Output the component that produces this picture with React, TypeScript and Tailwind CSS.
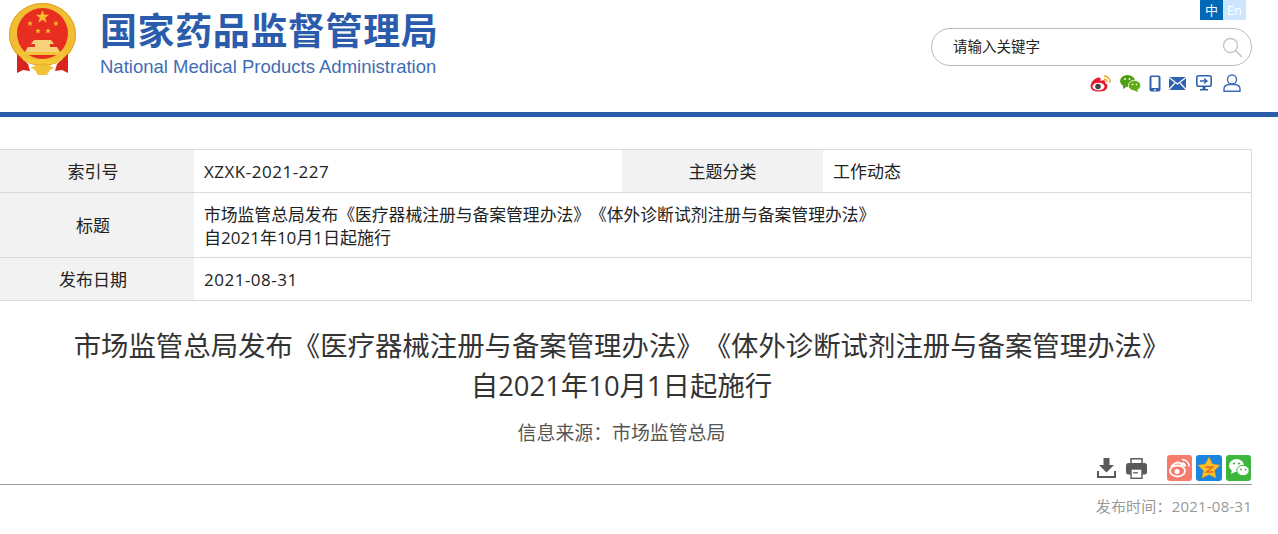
import React from 'react';

const CJK = "font-['Open_Sans','Noto_Sans_CJK_SC',sans-serif] [text-spacing-trim:space-all]";

// 五角星 points
const starPoints = (cx: number, cy: number, r: number) =>
  Array.from({ length: 10 })
    .map((_, i) => {
      const a = (Math.PI / 5) * i - Math.PI / 2;
      const rad = i % 2 === 0 ? r : r * 0.4;
      return `${cx + rad * Math.cos(a)},${cy + rad * Math.sin(a)}`;
    })
    .join(' ');

// --- emblem ---
const Emblem = () => (
  <svg width="68" height="74" viewBox="9 2 68 74" className="shrink-0">
    <ellipse cx="42.500" cy="34.500" rx="33.500" ry="31.500" fill="#f1bd33" />
    <ellipse cx="42.500" cy="34.500" rx="33" ry="31" fill="none" stroke="#e2a024" strokeWidth="1" />
    <circle cx="42.500" cy="33.500" r="25.500" fill="#e72e20" />
    <polygon points={starPoints(42.500, 17, 7)} fill="#f5c02c" />
    <polygon points={starPoints(30, 23.500, 3)} fill="#f5c02c" />
    <polygon points={starPoints(56, 23.500, 3)} fill="#f5c02c" />
    <polygon points={starPoints(38, 31, 3)} fill="#f5c02c" />
    <polygon points={starPoints(48, 31, 3)} fill="#f5c02c" />
    <path d="M34 40 H51 L54 44 H50 V47 H57 L60 52 H25 L28 47 H35 V44 H31 Z" fill="#f5d27a" />
    <path d="M22 52 H63 V55 H22 Z" fill="#f3c53b" />
    <path d="M17 54 L28 64 L30 71 L23 70 L17 73 Z M68 54 L57 64 L55 71 L62 70 L68 73 Z" fill="#d7241d" />
    <path d="M21 55 Q32 62 42.500 59 Q53 62 64 55 L62 60 Q53 66 42.500 63 Q32 66 23 60 Z" fill="#f6c836" />
    <path d="M31 68 Q37 63 42.500 66 Q48 63 54 68 L50 70 L47 75 H38 L35 70 Z" fill="#f1c23a" />
  </svg>
);

// --- header icons ---
const Weibo = () => (
  <svg width="21" height="17" viewBox="0 0 21 17">
    <path d="M0.500 11 Q1 6.500 5 4 Q9.500 1.500 10.500 3.500 Q11 5 10 6 Q14 4.500 15 6 Q15.500 7 15 8 Q17.500 9 17.500 11 Q17.500 16.500 9 16.500 Q0.500 16.500 0.500 11 Z" fill="#e6162d" />
    <ellipse cx="8.500" cy="11.500" rx="6" ry="3.800" fill="#fff" />
    <circle cx="8" cy="11.500" r="2.800" fill="#444" />
    <path d="M14 1 a6 6 0 0 1 6 6.500" fill="none" stroke="#f5a623" strokeWidth="1.600" />
    <path d="M14 4.200 a3 3 0 0 1 3 3" fill="none" stroke="#f5a623" strokeWidth="1.400" />
  </svg>
);

const Wechat = () => (
  <svg width="21" height="17" viewBox="0 0 21 17">
    <ellipse cx="7.500" cy="6" rx="7.500" ry="6" fill="#4f9e14" />
    <path d="M3 10 L3 14 L7 11.500 Z" fill="#4f9e14" />
    <ellipse cx="14.500" cy="10.500" rx="6.200" ry="5.200" fill="#5fae17" stroke="#fff" strokeWidth="0.800" />
    <path d="M17 14 L18 17 L14 15.500 Z" fill="#5fae17" />
    <circle cx="5" cy="4" r="0.900" fill="#fff" />
    <circle cx="9.500" cy="4" r="0.900" fill="#fff" />
    <circle cx="12.500" cy="9.500" r="0.800" fill="#fff" />
    <circle cx="16.500" cy="9.500" r="0.800" fill="#fff" />
  </svg>
);

const Phone = () => (
  <svg width="12" height="17" viewBox="0 0 12 17">
    <rect x="0.500" y="0.500" width="11" height="16" rx="2" fill="#2e62ae" />
    <rect x="2.500" y="2" width="7" height="11" fill="#fff" />
    <circle cx="6" cy="14.800" r="0.900" fill="#fff" />
  </svg>
);

const Mail = () => (
  <svg width="17" height="13" viewBox="0 0 17 13">
    <rect width="17" height="13" fill="#2e62ae" />
    <path d="M0 0.500 L8.500 7 L17 0.500 M0 12.500 L6 6 M17 12.500 L11 6" fill="none" stroke="#fff" strokeWidth="1.200" />
  </svg>
);

const Screen = () => (
  <svg width="16" height="16" viewBox="0 0 16 16">
    <rect x="0.800" y="0.800" width="14.400" height="10.400" rx="2" fill="#fff" stroke="#2e62ae" strokeWidth="1.600" />
    <path d="M4 6 H10 M8 3.500 L11 6 L8 8.500" fill="none" stroke="#2e62ae" strokeWidth="1.300" />
    <path d="M6.500 12 H9.500 V14 H12 V15.500 H4 V14 H6.500 Z" fill="#2e62ae" />
  </svg>
);

const User = () => (
  <svg width="18" height="18" viewBox="0 0 18 18">
    <circle cx="9" cy="5.500" r="4.500" fill="none" stroke="#3c6db5" strokeWidth="1.400" />
    <path d="M1 17.200 V15 Q1 11.500 5.500 10.500 H12.500 Q17 11.500 17 15 V17.200 Z" fill="none" stroke="#3c6db5" strokeWidth="1.400" />
  </svg>
);

const SearchIcon = () => (
  <svg width="21" height="21" viewBox="0 0 21 21">
    <circle cx="8.500" cy="8.500" r="7" fill="none" stroke="#c6c6c6" strokeWidth="1.400" />
    <path d="M13.500 13.500 L20 20" stroke="#c6c6c6" strokeWidth="1.600" />
  </svg>
);

// --- article toolbar icons ---
const Download = () => (
  <svg width="19" height="20" viewBox="0 0 19 20">
    <path d="M6.500 0 H12.500 V7 H17 L9.500 14.500 L2 7 H6.500 Z" fill="#5a5a5a" />
    <path d="M1 13 V19 H18 V13" fill="none" stroke="#5a5a5a" strokeWidth="2" />
  </svg>
);

const Printer = () => (
  <svg width="21" height="21" viewBox="0 0 21 21">
    <path d="M5 0.800 H16 V6 H5 Z" fill="#fff" stroke="#5a5a5a" strokeWidth="1.500" />
    <rect x="0" y="5" width="21" height="11.500" rx="2.500" fill="#5a5a5a" />
    <rect x="5" y="11" width="11" height="9.300" fill="#fff" stroke="#5a5a5a" strokeWidth="1.400" />
    <rect x="7" y="14" width="5" height="1.500" fill="#777" />
  </svg>
);

const ShareWeibo = () => (
  <svg width="25" height="26" viewBox="0 0 25 26" className="rounded-[3px] bg-[#f77b6c]">
    <ellipse cx="10.500" cy="16" rx="7.500" ry="5.500" fill="none" stroke="#fff" strokeWidth="1.800" />
    <path d="M4 12 Q9 6 13 8 Q15 10 18 11" fill="none" stroke="#fff" strokeWidth="1.800" />
    <circle cx="10" cy="16.500" r="2.500" fill="#fff" />
    <path d="M15 4.500 a7 7 0 0 1 7 7 M15 8 a3.500 3.500 0 0 1 3.500 3.500" fill="none" stroke="#fff" strokeWidth="1.500" />
  </svg>
);

const ShareQzone = () => (
  <svg width="26" height="26" viewBox="0 0 26 26" className="rounded-[3px] bg-[#1a86e0]">
    <path d="M13 2 L16.500 9 L24 10.200 L18.500 15.500 L20 23 L13 19.500 L6 23 L7.500 15.500 L2 10.200 L9.500 9 Z" fill="#fbc02d" stroke="#e8930c" strokeWidth="0.600" />
    <path d="M9.500 12 H16.500 L10.500 17 H17" fill="none" stroke="#e2681a" strokeWidth="1.500" />
  </svg>
);

const ShareWechat = () => (
  <svg width="25" height="26" viewBox="0 0 25 26" className="rounded-[3px] bg-[#3cb53c]">
    <ellipse cx="10.500" cy="10.500" rx="7.500" ry="6.500" fill="#fff" />
    <path d="M6 15 L5 19 L10 16.500 Z" fill="#fff" />
    <ellipse cx="17" cy="15.500" rx="6.200" ry="5.200" fill="#fff" stroke="#3cb53c" strokeWidth="1" />
    <circle cx="8" cy="8.500" r="1.100" fill="#3cb53c" />
    <circle cx="13" cy="8.500" r="1.100" fill="#3cb53c" />
    <circle cx="15" cy="14.500" r="0.900" fill="#3cb53c" />
    <circle cx="19.500" cy="14.500" r="0.900" fill="#3cb53c" />
  </svg>
);

const labelCell = "bg-[#f2f2f2] flex items-center justify-center pt-[1px]";
const firstLabel = "bg-[#f2f2f2] flex items-center justify-center pr-[8px] pt-[1px]";
const valueCell = "flex items-center px-[10px] pt-[1px]";

export default function App() {
  return (
    <div className={`w-[1278px] h-[534px] overflow-hidden bg-white text-[#222] ${CJK}`}>
      <header className="h-[112px] flex justify-between pl-[9px] pr-[26px]">
        <div className="flex items-start pt-[2px]">
          <Emblem />
          <div className="ml-[23px] pt-[5px]">
            <div className="text-[37px] leading-[48px] font-bold tracking-[0.6px] whitespace-nowrap text-[#2b5cab]">国家药品监督管理局</div>
            <div className="text-[18.500px] leading-[24px] whitespace-nowrap text-[#3f6db5] font-['Liberation_Sans',sans-serif]">National Medical Products Administration</div>
          </div>
        </div>
        <div className="w-[321px] flex flex-col items-end">
          <div className="flex mr-[6px] text-[13px] leading-[20px] text-white">
            <span className="w-[23px] h-[20px] text-center bg-[#0068b7]">中</span>
            <span className="w-[23px] h-[20px] text-center bg-[#cce6ff]">En</span>
          </div>
          <div className="mt-[8px] w-[321px] h-[38px] rounded-full border border-[#bbb] flex items-center justify-between pl-[21px] pr-[8px]">
            <span className="text-[14.500px]">请输入关键字</span>
            <SearchIcon />
          </div>
          <div className="mt-[8px] flex items-center gap-[9px] pr-[11px]">
            <Weibo />
            <Wechat />
            <div className="-ml-[1px]"><Phone /></div>
            <div className="-ml-[1px]"><Mail /></div>
            <div className="ml-[1px]"><Screen /></div>
            <div className="ml-[2px]"><User /></div>
          </div>
        </div>
      </header>
      <div className="h-[5px] bg-[#2b5cab]" />

      <main className="pt-[32px]">
        <div className="w-[1252px] border border-l-0 border-[#d9d9d9] text-[17px]">
          <div className="grid grid-cols-[194px_428px_201px_1fr] h-[43px] border-b border-[#d9d9d9]">
            <div className={firstLabel}>索引号</div>
            <div className={`${valueCell} tracking-[0.5px]`}>XZXK-2021-227</div>
            <div className={labelCell}>主题分类</div>
            <div className={valueCell}>工作动态</div>
          </div>
          <div className="grid grid-cols-[194px_1fr] h-[65px] border-b border-[#d9d9d9]">
            <div className={firstLabel}>标题</div>
            <div className={`${valueCell} leading-[23px]`}>
              <div>
                <span className="text-[16.800px]">市场监管总局发布《医疗器械注册与备案管理办法》《体外诊断试剂注册与备案管理办法》</span>
                <br />
                自2021年10月1日起施行
              </div>
            </div>
          </div>
          <div className="grid grid-cols-[194px_1fr] h-[42px]">
            <div className={firstLabel}>发布日期</div>
            <div className={`${valueCell} tracking-[0.5px]`}>2021-08-31</div>
          </div>
        </div>

        <article className="w-[1252px]">
          <h1 className="mt-[25px] pr-[9px] text-center text-[27.400px] leading-[40px] font-normal text-[#333]">
            市场监管总局发布《医疗器械注册与备案管理办法》《体外诊断试剂注册与备案管理办法》
            <br />
            自2021年10月1日起施行
          </h1>
          <div className="mt-[14px] pr-[9px] text-center text-[18.900px] leading-[26px] text-[#555]">信息来源：市场监管总局</div>
          <div className="mt-[9px] h-[30px] flex items-center justify-end border-b border-[#999] pb-[3px]">
            <div className="flex items-center gap-[10px] mr-[20px]">
              <Download />
              <Printer />
            </div>
            <div className="flex items-center gap-[4px] pr-[1px]">
              <ShareWeibo />
              <ShareQzone />
              <ShareWechat />
            </div>
          </div>
          <div className="mt-[11px] text-right text-[15px] leading-[20px] tracking-[0.2px] text-[#999]">发布时间：2021-08-31</div>
        </article>
      </main>
    </div>
  );
}
